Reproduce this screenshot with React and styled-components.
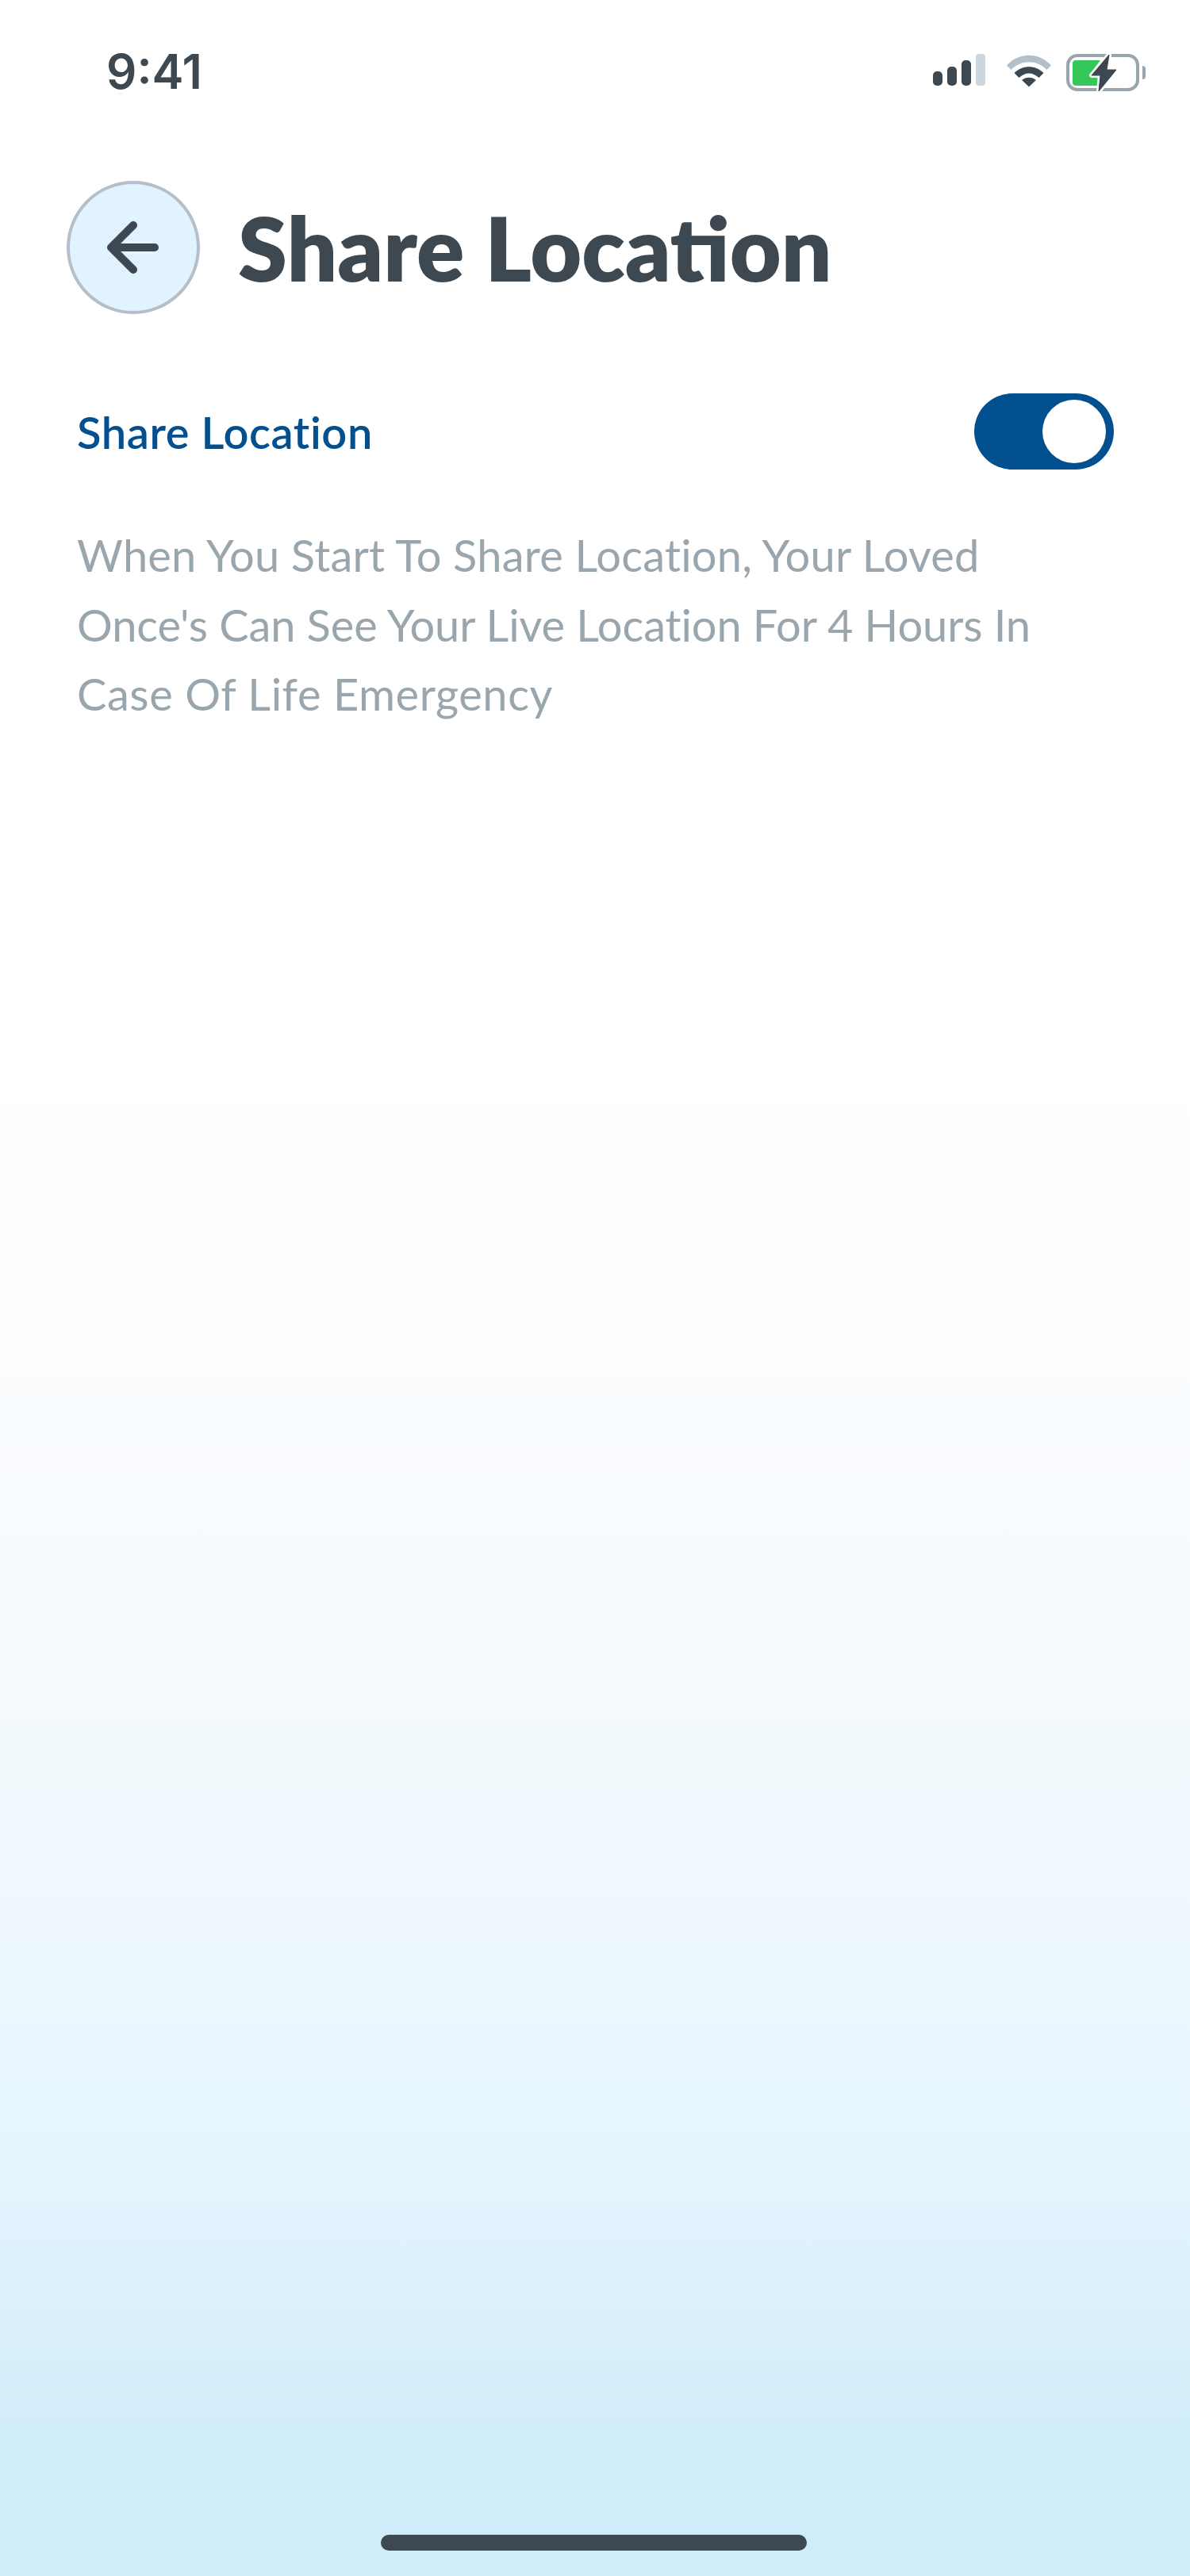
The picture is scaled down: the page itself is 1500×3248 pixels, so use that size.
import React from "react";
import styled, { createGlobalStyle } from "styled-components";

const GlobalStyle = createGlobalStyle`
  html, body {
    margin: 0;
    padding: 0;
    background: #fff;
  }
`;

const SignalIcon = () => (
  <svg width="76" height="42" viewBox="0 0 76 42">
    <rect x="0" y="22" width="12" height="18" rx="5" fill="#3e4850" />
    <rect x="18" y="16" width="12" height="24" rx="5" fill="#3e4850" />
    <rect x="36" y="8" width="12" height="32" rx="5" fill="#3e4850" />
    <rect x="54" y="0" width="12" height="40" rx="4" fill="#c9d6df" />
  </svg>
);

const WifiIcon = () => (
  <svg width="58" height="42" viewBox="0 0 58 42">
    <path d="M1 14.5 C16 -2.5 42 -2.5 57 14.5 L51.5 20 C39 7 19 7 6.5 20 Z" fill="#b3c0cb" />
    <path d="M10.5 24 C20.5 13.5 37.5 13.5 47.5 24 L41.5 30 C34 22.5 24 22.5 16.5 30 Z" fill="#3e4850" />
    <path d="M20 33 C25 28.5 33 28.5 38 33 L29 41.5 Z" fill="#3e4850" />
  </svg>
);

const BatteryIcon = () => (
  <svg width="102" height="50" viewBox="0 0 102 50">
    <rect x="4" y="2" width="88" height="43" rx="12" fill="none" stroke="#9aa6ae" strokeWidth="4" />
    <path d="M98 15 a4 4 0 0 1 4 4 v9 a4 4 0 0 1 -4 4 Z" fill="#9aa6ae" />
    <path d="M14 8 H45 L31 27 L43 31 V40 H14 a4 4 0 0 1 -4 -4 V12 a4 4 0 0 1 4 -4 Z" fill="#34c759" />
    <path d="M56 1 L34 27 H45 L43 47 L65 20 H53 Z" fill="#3e4850" stroke="#fff" strokeWidth="6" strokeLinejoin="round" paintOrder="stroke" />
    <path d="M56 1 L34 27 H45 L43 47 L65 20 H53 Z" fill="#3e4850" stroke="#3e4850" strokeWidth="1" strokeLinejoin="round" />
  </svg>
);

const BackArrow = () => (
  <svg width="66" height="66" viewBox="0 0 66 66">
    <path d="M60 33 H6 M33 5 L5 33 L33 61" fill="none" stroke="#3e4850" strokeWidth="10" strokeLinecap="round" strokeLinejoin="round" />
  </svg>
);

const App = () => (
  <>
    <GlobalStyle />
    <Page>
      <StatusBar>
        <Time>9:41</Time>
        <StatusIcons>
          <SignalIcon />
          <WifiIcon />
          <BatteryIcon />
        </StatusIcons>
      </StatusBar>

      <Header>
        <BackButton aria-label="Back">
          <BackArrow />
        </BackButton>
        <Title>Share Location</Title>
      </Header>

      <SettingRow>
        <SettingLabel>Share Location</SettingLabel>
        <Toggle>
          <Knob />
        </Toggle>
      </SettingRow>

      <Description>
        <Line $track={0.2}>When You Start To Share Location, Your Loved</Line>
        <Line $track={-0.1}>Once's Can See Your Live Location For 4 Hours In</Line>
        <Line $track={0.55}>Case Of Life Emergency</Line>
      </Description>

      <HomeIndicator />
    </Page>
  </>
);

export default App;

const Page = styled.div`
  width: 1500px;
  height: 3248px;
  box-sizing: border-box;
  display: flex;
  flex-direction: column;
  background: linear-gradient(
    180deg,
    #ffffff 0%,
    #ffffff 40%,
    #f8fbfe 60%,
    #e8f6fd 82%,
    #cfecfa 96%,
    #cfecfa 100%
  );
  font-family: "Lato", "Noto Sans", sans-serif;
`;

const StatusBar = styled.div`
  height: 228px;
  box-sizing: border-box;
  padding: 58px 56px 0 134px;
  display: flex;
  justify-content: space-between;
  align-items: flex-start;
`;

const Time = styled.div`
  font-family: "Inter", sans-serif;
  font-size: 60px;
  font-weight: 600;
  line-height: 64px;
  color: #3e4850;
`;

const StatusIcons = styled.div`
  display: flex;
  align-items: flex-start;
  gap: 16px;
  padding-top: 10px;
  margin-left: auto;

  & svg {
    display: block;
  }
`;

const Header = styled.div`
  display: flex;
  align-items: center;
  gap: 48px;
  padding-left: 84px;
`;

const BackButton = styled.div`
  width: 168px;
  height: 168px;
  box-sizing: border-box;
  border-radius: 50%;
  border: 4px solid #b3c0cb;
  background: #e0f3fe;
  display: flex;
  align-items: center;
  justify-content: center;
`;

const Title = styled.h1`
  margin: 0;
  font-size: 112px;
  font-weight: 800;
  line-height: 130px;
  color: #3e4850;
`;

const SettingRow = styled.div`
  display: flex;
  align-items: center;
  justify-content: space-between;
  margin-top: 100px;
  padding: 0 96px 0 97px;
`;

const SettingLabel = styled.div`
  font-size: 56px;
  font-weight: 600;
  letter-spacing: 0.6px;
  color: #02508f;
`;

const Toggle = styled.div`
  width: 176px;
  height: 96px;
  box-sizing: border-box;
  padding: 8px 10px;
  border-radius: 48px;
  background: #02508f;
  display: flex;
  justify-content: flex-end;
`;

const Knob = styled.div`
  width: 80px;
  height: 80px;
  border-radius: 50%;
  background: #fff;
`;

const Description = styled.div`
  margin-top: 64px;
  padding-left: 97px;
  font-size: 56px;
  font-weight: 400;
  line-height: 87.5px;
  color: #9aa6ae;
`;

const Line = styled.div`
  letter-spacing: ${(p) => p.$track}px;
`;

const HomeIndicator = styled.div`
  width: 537px;
  height: 20px;
  border-radius: 10px;
  background: #3e4850;
  margin: auto 0 32px 480px;
`;
